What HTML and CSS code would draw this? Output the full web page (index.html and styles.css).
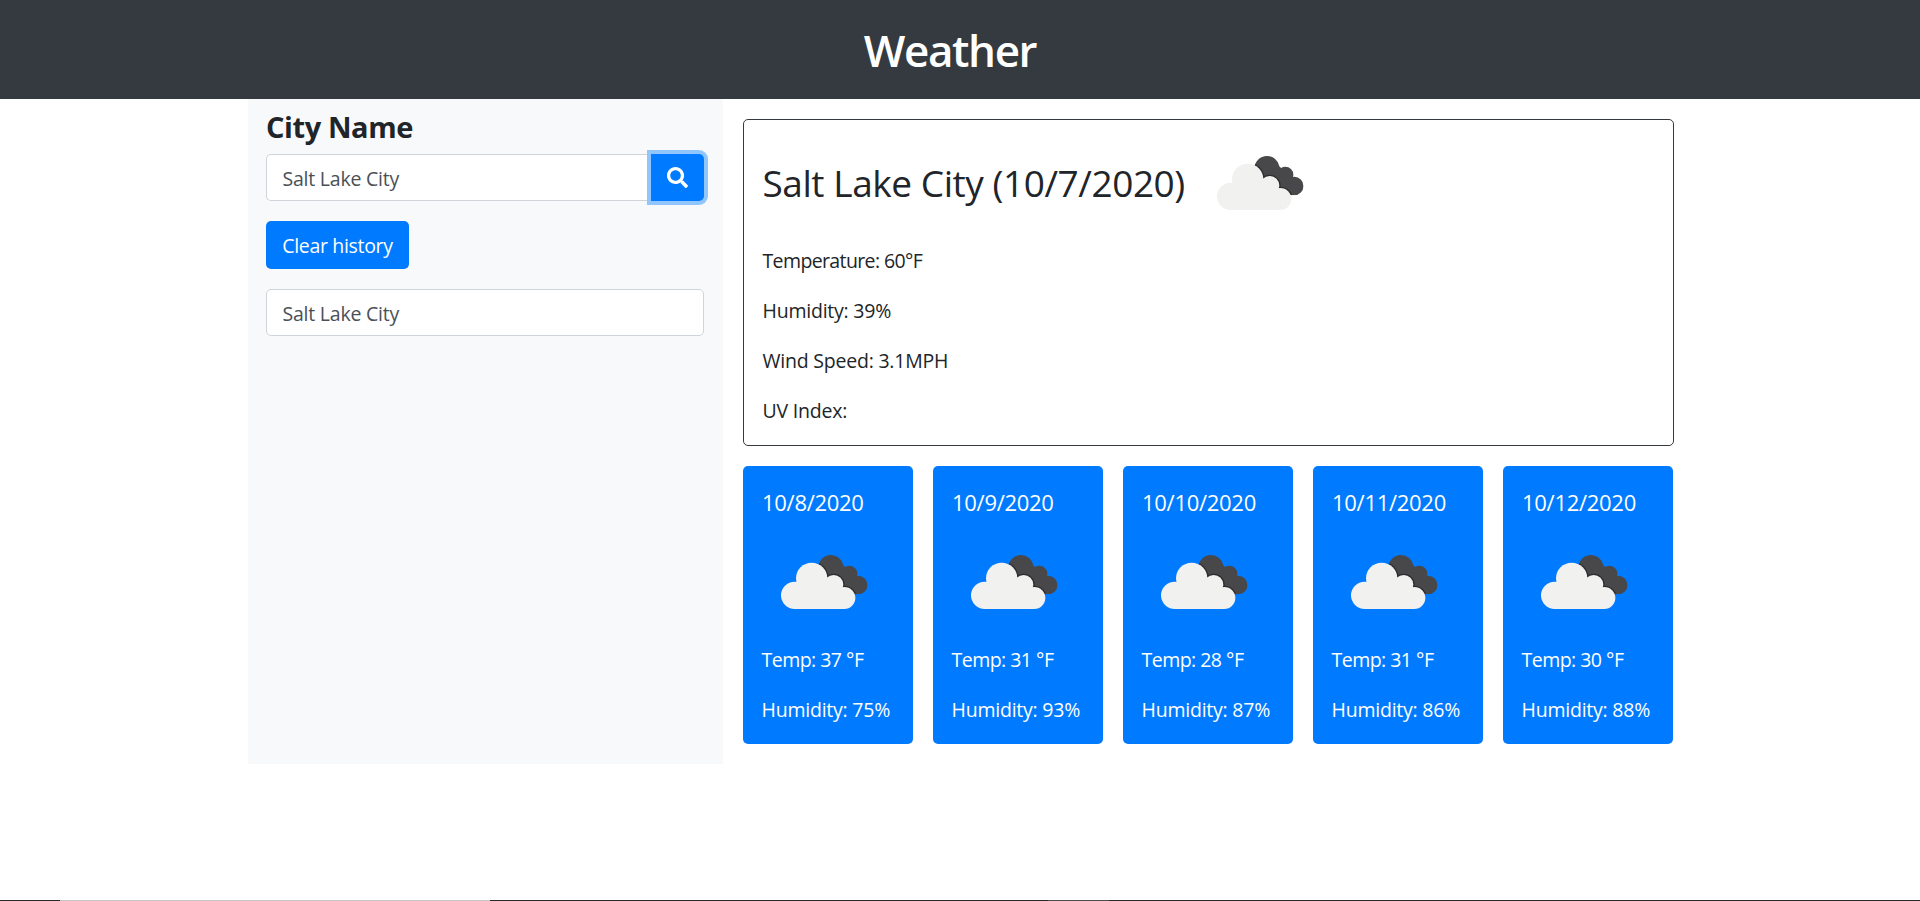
FILE: index.html
```
<!DOCTYPE html>
<html lang="en">
<head>
<meta charset="utf-8">
<title>Weather</title>
<link rel="stylesheet" href="styles.css">
</head>
<body>
<svg class="defs" width="0" height="0">
  <defs>
    <clipPath id="back-clip">
      <circle cx="150" cy="38" r="38"/><circle cx="205" cy="56" r="24"/><circle cx="232" cy="90" r="27.5"/>
      <path d="M112 38L186 30L226 66L232 117.500L190 117L112 100Z"/>
    </clipPath>
    <symbol id="clouds" viewBox="0 0 375 375">
      <g transform="translate(57 105)">
        <g clip-path="url(#back-clip)">
          <rect width="262" height="164" fill="#48484a"/>
          <g fill="#2c2c2e"><circle cx="92" cy="70" r="51"/><circle cx="158" cy="89" r="33"/><circle cx="190" cy="129" r="37"/></g>
        </g>
        <g fill="#f1f1f0"><circle cx="41" cy="121" r="41"/><circle cx="92" cy="70" r="47"/><circle cx="158" cy="89" r="29"/><circle cx="190" cy="129" r="33"/><path d="M41 162V90L92 60L158 88L190 110V162Z"/></g>
      </g>
    </symbol>
  </defs>
</svg>
<header class="header"><h1 class="brand"><span>Weather</span></h1></header>
<main class="container">
  <aside class="sidebar">
    <h2 class="label"><span>City Name</span></h2>
    <div class="search">
      <div class="field field-search"><span>Salt Lake City</span></div>
      <button class="search-btn" aria-label="Search"><svg viewBox="0 0 512 512" width="21" height="21"><path fill="currentColor" d="M505 442.700L405.300 343c-4.500-4.500-10.600-7-17-7H372c27.600-35.300 44-79.700 44-128C416 93.100 322.900 0 208 0S0 93.100 0 208s93.100 208 208 208c48.300 0 92.700-16.400 128-44v16.300c0 6.400 2.500 12.500 7 17l99.700 99.700c9.400 9.400 24.600 9.400 33.900 0l28.300-28.300c9.400-9.400 9.400-24.600.1-34zM208 336c-70.700 0-128-57.200-128-128 0-70.700 57.200-128 128-128 70.700 0 128 57.200 128 128 0 70.700-57.200 128-128 128z"/></svg></button>
    </div>
    <button class="clear"><span>Clear history</span></button>
    <div class="field"><span>Salt Lake City</span></div>
  </aside>
  <section class="content">
    <article class="current">
      <div class="current-head"><h3 class="title"><span>Salt Lake City (10/7/2020)</span></h3><svg class="icon"><use href="#clouds"/></svg></div>
      <p class="temp-now">Temperature: 60°F</p>
      <p>Humidity: 39%</p>
      <p>Wind Speed: 3.1MPH</p>
      <p>UV Index:</p>
    </article>
    <div class="forecast">
      <article class="day"><h5 class="date">10/8/2020</h5><svg class="icon"><use href="#clouds"/></svg><p class="temp">Temp: 37 °F</p><p>Humidity: 75%</p></article>
      <article class="day"><h5 class="date">10/9/2020</h5><svg class="icon"><use href="#clouds"/></svg><p class="temp">Temp: 31 °F</p><p>Humidity: 93%</p></article>
      <article class="day"><h5 class="date">10/10/2020</h5><svg class="icon"><use href="#clouds"/></svg><p class="temp">Temp: 28 °F</p><p>Humidity: 87%</p></article>
      <article class="day"><h5 class="date">10/11/2020</h5><svg class="icon"><use href="#clouds"/></svg><p class="temp">Temp: 31 °F</p><p>Humidity: 86%</p></article>
      <article class="day"><h5 class="date">10/12/2020</h5><svg class="icon"><use href="#clouds"/></svg><p class="temp">Temp: 30 °F</p><p>Humidity: 88%</p></article>
    </div>
  </section>
</main>
<footer class="taskbar"><i class="seg-light"></i><i class="seg-mid"></i></footer>
</body>
</html>
```
FILE: styles.css
```
* { box-sizing: border-box; }
body {
  margin: 0;
  height: 901px;
  overflow: hidden;
  display: flex;
  flex-direction: column;
  background: #fff;
  color: #212529;
  font: 400 19.5px/30px "Open Sans", "Noto Sans", sans-serif;
  letter-spacing: -0.22px;
}
h1, h2, h3, h5, p { margin: 0; }
button { border: 0; padding: 0; font: inherit; letter-spacing: inherit; color: #fff; background: #007bff; }
.defs { position: absolute; }
.header {
  height: 99px;
  flex: none;
  padding: 20px 20px 0 0;
  background: #343a40;
  color: #fff;
  text-align: center;
}
.brand { font-size: 44px; line-height: 60px; font-weight: 600; letter-spacing: -1.4px; }
.container { display: flex; width: 1426px; margin-left: 248px; }
.sidebar { width: 475px; height: 665px; padding: 9px 19px 0 18px; background: #f8f9fa; }
.label { height: 46px; font-size: 29px; line-height: 38px; font-weight: 700; letter-spacing: -0.4px; }
.search { display: flex; margin-bottom: 20px; }
.field {
  height: 47px;
  padding: 9px 15.5px;
  line-height: 30px;
  border: 1px solid #ced4da;
  border-radius: 5px;
  background: #fff;
  color: #495057;
}
.field-search { flex: 1; border-right: 0; border-radius: 5px 0 0 5px; }
.search-btn {
  display: flex;
  align-items: center;
  justify-content: center;
  width: 53px;
  height: 47px;
  border-radius: 0 5px 5px 0;
  box-shadow: 0 0 0 4px #91c5fd;
}
.clear { display: block; width: 143px; height: 48px; padding-top: 2px; margin-bottom: 20px; border-radius: 5px; letter-spacing: -0.33px; }
.content { flex: 1; padding: 20px 0 0 20px; }
.current { height: 327px; padding: 0 18.5px; border: 1px solid #343a40; border-radius: 5px; }
.current-head { display: flex; align-items: center; gap: 13px; height: 126px; }
.title { padding-bottom: 1px; font-size: 37px; line-height: 44px; font-weight: 400; letter-spacing: -0.44px; white-space: nowrap; }
.icon { display: block; flex: none; width: 125px; height: 125px; }
.current p { height: 50px; }
.current .temp-now { letter-spacing: -0.62px; }
.forecast { display: grid; grid-template-columns: repeat(5, 170px); gap: 20px; margin-top: 20px; }
.day { height: 278px; padding: 19px 18.5px; border-radius: 5px; background: #007bff; color: #fff; white-space: nowrap; }
.day .icon { margin-left: 0.5px; }
.date { height: 35px; padding-left: 0.5px; font-size: 22px; line-height: 34px; font-weight: 400; letter-spacing: -0.28px; }
.day p { height: 50px; }
.day .temp { letter-spacing: -0.52px; }
.taskbar { display: flex; flex: none; height: 1px; margin-top: auto; padding-left: 60px; background: #292929; }
.seg-light { width: 430px; background: #c5c5c5; }
.seg-mid { width: 61px; margin-left: 558px; background: #4c4c4c; }
```
